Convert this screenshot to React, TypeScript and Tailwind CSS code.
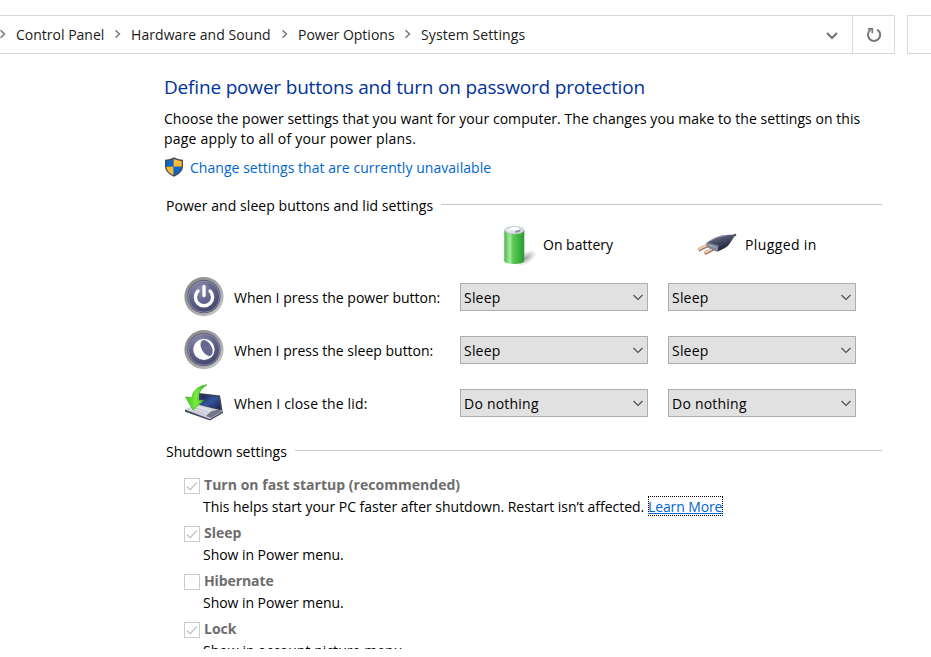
import React from "react";

const Crumb = ({ children, width }: { children: string; width: string }) => (
  <>
    <svg className="mb-[2px] h-[10px] w-[7px] shrink-0" viewBox="0 0 7 10" fill="none" stroke="#7a7a7a" strokeWidth="1.6">
      <path d="M.5 1.2 4.4 5 .5 8.800" />
    </svg>
    <span className={`shrink-0 pl-[9px] ${width}`}>{children}</span>
  </>
);

const Shield = () => (
  <svg className="mb-[2px] h-5 w-5 shrink-0" viewBox="0 0 20 20">
    <path d="M10 .3C7.500 2 4 2.700 1 2.800V9c0 5 3.600 8.400 9 10.700C15.400 17.400 19 14 19 9V2.800C16 2.700 12.500 2 10 .3Z" fill="#454b52" />
    <path d="M9.600 2C7.400 3.200 4.700 3.800 2.300 4v5.800h7.300Z" fill="#0b68c8" />
    <path d="M10 2c2.400 1.200 5 1.800 7.700 2v5.800H9.600V2Z" fill="#ffba3c" />
    <path d="M2.300 9.800c.3 3.800 3 6.600 7.300 8.500V9.800Z" fill="#ffba3c" />
    <path d="M17.700 9.800c-.3 3.800-3.300 6.600-8.100 8.500V9.800Z" fill="#0b68c8" />
  </svg>
);

const Battery = () => (
  <svg className="mb-px h-10 w-10 shrink-0" viewBox="0 0 40 40">
    <defs>
      <linearGradient id="cell">
        <stop offset="0" stopColor="#4fa94d" />
        <stop offset=".12" stopColor="#6fd06a" />
        <stop offset=".28" stopColor="#a6eaa1" />
        <stop offset=".42" stopColor="#5fcb5a" />
        <stop offset=".75" stopColor="#3ab23d" />
        <stop offset="1" stopColor="#319639" />
      </linearGradient>
      <radialGradient id="cellShade">
        <stop offset="0" stopColor="#777" stopOpacity=".7" />
        <stop offset="1" stopColor="#999" stopOpacity="0" />
      </radialGradient>
    </defs>
    <ellipse cx="27" cy="33" rx="12" ry="6" fill="url(#cellShade)" transform="rotate(-32 27 33)" />
    <path d="M5.300 4.900v31c0 4 20 4 20 0v-31Z" fill="url(#cell)" />
    <ellipse cx="15.300" cy="5.200" rx="9.600" ry="3.800" fill="#dcdfe6" stroke="#a3bfa5" strokeWidth=".6" />
    <ellipse cx="15.500" cy="3.800" rx="4.500" ry="1.800" fill="#fff" />
    <path d="M16 6 22 4.500l-1.500 2.500-4 .7Z" fill="#8f8bb0" />
    <path d="m8 5 4-1-1 3Z" fill="#f7f8fa" />
  </svg>
);

const Plug = () => (
  <svg className="h-6 w-10 shrink-0" viewBox="0 0 40 24">
    <defs>
      <linearGradient id="plugBody" x1="0" y1="0" x2=".5" y2="1">
        <stop offset="0" stopColor="#8c90a1" />
        <stop offset=".4" stopColor="#50546c" />
        <stop offset="1" stopColor="#1b1e38" />
      </linearGradient>
    </defs>
    <path d="M33 4 38 1.500" stroke="#4d5557" strokeWidth="2.500" />
    <g strokeLinecap="butt">
      <path d="m.5 17 10-5M6.500 20.500l10-5" stroke="#98705a" strokeWidth="3.400" />
      <path d="m.5 16.300 10-5M6.500 19.800l10-5" stroke="#efcfaa" strokeWidth="2" />
    </g>
    <path d="M8.500 10C15 5 21 2.500 28 2c4 0 7-.5 8 .3.900 1.300-1.500 4-4 8-2.500 4-7 6-12.500 8.200L9 14Z" fill="url(#plugBody)" />
    <path d="M8.500 9.500 20.500 12.500l-1 6.500-10.500-5Z" fill="#85889b" />
    <path d="m11 12 6.500 2.500" stroke="#b5b4bd" strokeWidth=".8" />
    <path d="M9.500 9.500C16 5.500 22 2.800 29 2.500" fill="none" stroke="#a5a8b5" strokeWidth=".7" />
  </svg>
);

const RoundButton = ({ sleep = false }: { sleep?: boolean }) => (
  <svg className="h-10 w-10 shrink-0" viewBox="0 0 40 40">
    <defs>
      <linearGradient id="rim" x1="0" y1="0" x2="1" y2="1">
        <stop offset="0" stopColor="#858585" />
        <stop offset=".5" stopColor="#a1a1a1" />
        <stop offset="1" stopColor="#d0d0d0" />
      </linearGradient>
      <radialGradient id="face" cx=".38" cy=".25" r=".8">
        <stop offset="0" stopColor="#8b8dae" />
        <stop offset=".55" stopColor="#626389" />
        <stop offset="1" stopColor="#41426a" />
      </radialGradient>
    </defs>
    <circle cx="20" cy="19.700" r="19.600" fill="url(#rim)" />
    <circle cx="20" cy="19.700" r="16.600" fill="#51526f" />
    <circle cx="20" cy="19.700" r="15.600" fill="url(#face)" stroke="#9b9cb4" strokeWidth=".8" />
    {sleep ? (
      <>
        <circle cx="20" cy="19.500" r="10.600" fill="#fff" />
        <ellipse cx="22.600" cy="18" rx="5" ry="8.600" fill="#66688d" transform="rotate(-30 22.600 18)" />
      </>
    ) : (
      <g fill="none" stroke="#fff" strokeLinecap="round" strokeWidth="3.300">
        <path d="M14 14a8.600 8.600 0 1 0 12 0" />
        <path d="M20 9.500v9" />
      </g>
    )}
  </svg>
);

const Laptop = () => (
  <svg className="mt-[2px] h-10 w-10 shrink-0" viewBox="0 0 40 40">
    <defs>
      <linearGradient id="lid" x1="0" y1="0" x2="1" y2="1">
        <stop offset="0" stopColor="#19213f" />
        <stop offset=".5" stopColor="#36539b" />
        <stop offset="1" stopColor="#142458" />
      </linearGradient>
      <linearGradient id="arrow">
        <stop offset="0" stopColor="#3fc51c" />
        <stop offset=".5" stopColor="#7bea3e" />
        <stop offset="1" stopColor="#36a718" />
      </linearGradient>
    </defs>
    <path d="M15 9 36 11.500 38.500 27 14 22Z" fill="#3b4052" />
    <path d="m17 10.500 17.500 2.300 1.800 12.200L16 21Z" fill="url(#lid)" />
    <path d="M1 25.500 12 20l27 7-13 8Z" fill="#ced2db" />
    <path d="M1 25.500v2.300l25 8.700 13-7.500v-2l-13 8Z" fill="#484d5f" />
    <path d="m5 25.500 8-4 15 4.500-7 4Z" fill="#dfe2e8" />
    <path d="m27 27.500 7-2 4 1.500-11 7-5-2Z" fill="#6f7687" />
    <path d="m8 25.500 13 4M11 24l13 4" stroke="#b2b7c3" strokeWidth=".8" />
    <path d="M23 .8C15 1.300 8.500 6.500 8 13.500L1.500 13 9 26 19.500 16.500l-5.500-.7C14 9.500 17 4.500 23 .8Z" fill="url(#arrow)" stroke="#45b825" strokeWidth=".7" />
  </svg>
);

const Dropdown = ({ value, className = "" }: { value: string; className?: string }) => (
  <button className={`mt-px flex h-7 w-[188px] shrink-0 items-center justify-between border border-[#adadad] bg-[#e1e1e1] pr-1 pl-[3px] text-left ${className}`}>
    <span className={`pt-px ${value === "Sleep" ? "tracking-[0.2px]" : "tracking-[0.22px]"}`}>{value}</span>
    <svg className="h-[7px] w-[10px]" viewBox="0 0 10 7" fill="none" stroke="#4c4c4c" strokeWidth="1.100">
      <path d="m.5 1 4.500 4.500L9.500 1" />
    </svg>
  </button>
);

const SettingRow = ({ icon, label, value, tracking = "" }: { icon: React.ReactNode; label: string; value: string; tracking?: string }) => (
  <div className="flex h-[53px] items-center pl-5">
    {icon}
    <span className={`w-[236px] shrink-0 pt-[3px] pl-[10px] ${tracking}`}>{label}</span>
    <Dropdown value={value} />
    <Dropdown value={value} className="ml-5" />
  </div>
);

const GroupTitle = ({ children, lineClass, textClass = "" }: { children: string; lineClass: string; textClass?: string }) => (
  <div className="flex h-5 w-[718px] items-center pl-[2px]">
    <span className={`shrink-0 ${textClass}`}>{children}</span>
    <div className={`mt-[-3px] ml-auto h-px bg-[#c8c8c8] ${lineClass}`} />
  </div>
);

const CheckItem = ({ label, checked, children, tracking = "" }: { label: string; checked: boolean; children: React.ReactNode; tracking?: string }) => (
  <div className="h-12 pl-5">
    <div className="flex h-[21px]">
      <div className="mt-[3px] h-4 w-4 shrink-0 border border-[#cccccc]">
        {checked && (
          <svg className="h-[14px] w-[14px]" viewBox="0 0 14 14" fill="none" stroke="#c6c6c6" strokeWidth="1.500">
            <path d="m2 7.500 3.200 3.200L12 3.500" />
          </svg>
        )}
      </div>
      <span className={`ml-1 leading-5 font-bold text-[#6d6d6d] ${tracking}`}>{label}</span>
    </div>
    <div className="flex h-[22px] items-center pl-[19px] tracking-[-0.04px] whitespace-pre">{children}</div>
  </div>
);

export default function App() {
  return (
    <div className="h-[657px] w-full overflow-hidden bg-white font-['Open_Sans',sans-serif] text-[14px] leading-5 whitespace-nowrap text-black">
      <div className="h-[649px] overflow-hidden">
        <header className="flex h-[54px] pt-[15px] text-[#1a1a1a]">
          <div className="flex h-[39px] w-[853px] items-center border border-l-0 border-[#d9d9d9]">
            <Crumb width="w-[108px]">Control Panel</Crumb>
            <Crumb width="w-[160px] tracking-[0.06px]">Hardware and Sound</Crumb>
            <Crumb width="w-[116px]">Power Options</Crumb>
            <Crumb width="w-[130px] tracking-[0.1px]">System Settings</Crumb>
            <svg className="mt-[3px] mr-[14px] ml-auto h-[8px] w-[12px]" viewBox="0 0 12 8" fill="none" stroke="#707070" strokeWidth="2">
              <path d="m1 1 5 5 5-5" />
            </svg>
          </div>
          <div className="flex h-[39px] w-[42px] items-center justify-center border border-l-0 border-[#d9d9d9]">
            <svg className="h-4 w-4" viewBox="0 0 16 16" fill="none" stroke="#787878" strokeWidth="2">
              <path d="M11.200 2.600a6.100 6.100 0 1 1-6.600.2" />
              <path d="M2 1.800h4.300v4.500" strokeWidth="1.700" />
            </svg>
          </div>
          <div className="ml-3 h-[39px] flex-1 border border-r-0 border-[#d9d9d9]" />
        </header>
        <main className="pl-[164px]">
          <h1 className="mt-[19px] h-7 text-[19px] leading-7 tracking-[-0.18px] text-[#003399]">Define power buttons and turn on password protection</h1>
          <p className="mt-2 h-10">
            <span className="block tracking-[0.05px]">Choose the power settings that you want for your computer. The changes you make to the settings on this</span>
            <span className="block tracking-[0.21px]">page apply to all of your power plans.</span>
          </p>
          <div className="mt-[9px] flex h-5 items-center text-[#0066cc]">
            <Shield />
            <span className="ml-[6px] tracking-[0.04px]">Change settings that are currently unavailable</span>
          </div>
          <div className="mt-[18px]">
            <GroupTitle lineClass="w-[441px]" textClass="tracking-[0.06px]">Power and sleep buttons and lid settings</GroupTitle>
          </div>
          <div className="flex h-[54px] items-center pt-1">
            <div className="ml-[335px] flex w-[199px] items-center">
              <Battery />
              <span className="ml-1">On battery</span>
            </div>
            <Plug />
            <span className="ml-[7px] tracking-[0.38px]">Plugged in</span>
          </div>
          <SettingRow icon={<RoundButton />} label="When I press the power button:" value="Sleep" />
          <SettingRow icon={<RoundButton sleep />} label="When I press the sleep button:" value="Sleep" />
          <SettingRow icon={<Laptop />} label="When I close the lid:" value="Do nothing" tracking="tracking-[0.15px]" />
          <div className="mt-[13px]">
            <GroupTitle lineClass="w-[587px]">Shutdown settings</GroupTitle>
          </div>
          <div className="mt-[13px]">
            <CheckItem label="Turn on fast startup (recommended)" checked tracking="tracking-[0.03px]">
              <span className="w-[445px] tracking-[-0.02px]">This helps start your PC faster after shutdown. Restart isn’t affected.</span>
              <a className="mb-[2px] flex h-5 w-[75px] items-center border border-dotted border-black pt-[2px] tracking-[-0.12px] text-[#0066cc] underline">
                <span className="-ml-px">Learn More</span>
              </a>
            </CheckItem>
            <CheckItem label="Sleep" checked>Show in Power menu.</CheckItem>
            <CheckItem label="Hibernate" checked={false} tracking="tracking-[-0.1px]">Show in Power menu.</CheckItem>
            <CheckItem label="Lock" checked><span className="tracking-[0.05px]">Show in account picture menu.</span></CheckItem>
          </div>
        </main>
      </div>
    </div>
  );
}
